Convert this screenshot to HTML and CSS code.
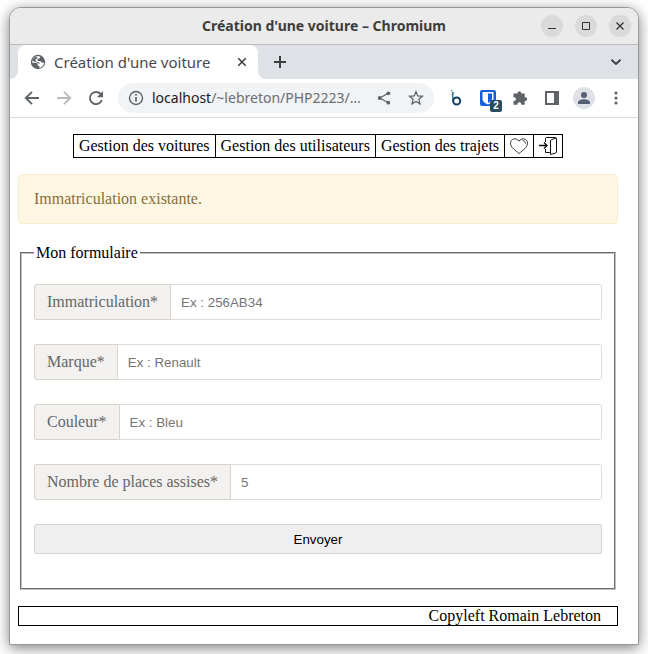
FILE: index.html
```html
<!DOCTYPE html>
<html lang="fr">
<head>
<meta charset="utf-8">
<title>Création d'une voiture</title>
<link rel="stylesheet" href="styles.css">
</head>
<body>
<div class="window">
  <header class="titlebar">
    <div class="window-title">Création d'une voiture – Chromium</div>
    <div class="window-buttons">
      <button class="round" aria-label="Réduire"><svg width="22" height="22" viewBox="0 0 22 22"><path d="M7 13.5h8" stroke="#333" stroke-width="1"/></svg></button>
      <button class="round" aria-label="Agrandir"><svg width="22" height="22" viewBox="0 0 22 22"><path d="M7.500 7.500h7v7h-7z" fill="none" stroke="#333"/></svg></button>
      <button class="round" aria-label="Fermer"><svg width="22" height="22" viewBox="0 0 22 22"><path d="M7.500 7.500l7 7m0-7l-7 7" stroke="#333" stroke-width="1.300"/></svg></button>
    </div>
  </header>

  <div class="tabstrip">
    <div class="strip-start"></div>
    <div class="tab">
      <svg width="16" height="16" viewBox="0 0 16 16"><circle cx="8" cy="8" r="7.200" fill="#5f6368"/><path d="M8.200 2l2 .8-.4 1.500-2 .5-.6 1.400 1 .9 2.200-.1 1.200 1.500 2.500.3a6.200 6.200 0 0 1-4.600 5.100l-.2-1.700-1.700-.7.300-1.700L6.100 9 2 8.600A6.200 6.200 0 0 1 8.200 2z" fill="#fff"/><path d="M3 5.200l2-2 2.300-.7-.4 1.900-1.400 1 .2 1.900 2.200.9 1.500.4.300 1.300L6 8.300 2 6.800z" fill="#5f6368"/></svg>
      <span class="tab-title">Création d'une voiture</span>
      <button class="plain" aria-label="Fermer l'onglet"><svg width="16" height="16" viewBox="0 0 16 16"><path d="M4.300 4.300l7.400 7.400m0-7.400l-7.400 7.400" stroke="#3c4043" stroke-width="1.600"/></svg></button>
    </div>
    <div class="strip-rest">
      <button class="plain" aria-label="Nouvel onglet"><svg width="14" height="14" viewBox="0 0 14 14"><path d="M7 1v12M1 7h12" stroke="#3c4043" stroke-width="2"/></svg></button>
      <button class="plain" aria-label="Rechercher des onglets"><svg width="12" height="12" viewBox="0 0 12 12"><path d="M1.500 3.800L6 8l4.500-4.200" fill="none" stroke="#3c4043" stroke-width="1.900"/></svg></button>
    </div>
  </div>

  <div class="toolbar">
    <div class="navigation">
      <button class="plain" aria-label="Précédent"><svg width="16" height="16" viewBox="0 0 16 16"><path d="M15 8H2M8 1.800L1.800 8 8 14.200" fill="none" stroke="#5f6368" stroke-width="1.900"/></svg></button>
      <button class="plain" aria-label="Suivant"><svg width="16" height="16" viewBox="0 0 16 16"><path d="M1 8h13M8 1.800L14.200 8 8 14.200" fill="none" stroke="#b7b9bc" stroke-width="1.900"/></svg></button>
      <button class="plain" aria-label="Actualiser"><svg width="16" height="16" viewBox="0 0 16 16"><path d="M13.800 10A6.100 6.100 0 1 1 12.600 4" fill="none" stroke="#5f6368" stroke-width="1.900"/><path d="M15 1v6.200H8.800z" fill="#5f6368"/></svg></button>
    </div>
    <div class="address">
      <svg width="16" height="16" viewBox="0 0 16 16"><circle cx="8" cy="8" r="6.500" fill="none" stroke="#5f6368" stroke-width="1.400"/><path d="M8 7v4.500M8 4v1.700" stroke="#5f6368" stroke-width="1.700"/></svg>
      <div class="url"><span class="host">localhost</span>/~lebreton/PHP2223/…</div>
      <button class="plain" aria-label="Partager"><svg width="14" height="14" viewBox="0 0 14 14"><path d="M11.300 2.300L2.800 7l8.500 4.700" fill="none" stroke="#5f6368" stroke-width="1.300"/><g fill="#5f6368"><circle cx="11.300" cy="2.300" r="1.900"/><circle cx="2.700" cy="7" r="1.900"/><circle cx="11.300" cy="11.700" r="1.900"/></g></svg></button>
      <button class="plain" aria-label="Favori"><svg width="16" height="16" viewBox="0 0 16 16"><path d="M8 1.700l1.800 4.200 4.600.4-3.500 3 1.100 4.500L8 11.400l-4 2.400 1.100-4.500-3.500-3 4.600-.4z" fill="none" stroke="#5f6368" stroke-width="1.300"/></svg></button>
    </div>
    <div class="extensions">
      <svg width="12" height="16" viewBox="0 0 12 16"><path d="M1 .8h1.500M2.300 2.600h1.500M1.500 4.400h2" stroke="#7da6ba" stroke-width="1.400"/><path d="M2.800 2v9" stroke="#3c7a97" stroke-width="1.500"/><circle cx="6.700" cy="11" r="3.500" fill="none" stroke="#143f60" stroke-width="2"/></svg>
      <div class="vault">
        <svg width="16" height="16" viewBox="0 0 16 16"><rect width="16" height="16" rx="2" fill="#175ddc"/><path d="M2.500 2h11v6.500c0 3-2.500 4.800-5.500 6-3-1.200-5.500-3-5.500-6z" fill="#fff"/><path d="M8 3.500h4v5c0 2-1.700 3.400-4 4.400z" fill="#175ddc"/></svg>
        <span class="count">2</span>
      </div>
      <svg width="16" height="16" viewBox="0 0 16 16"><path d="M1.500 3.500h4V3a1.800 1.800 0 0 1 3.700 0v.5h3.500v3.700h.6a1.800 1.800 0 0 1 0 3.700h-.6v3.800H9.200v-.6a1.800 1.800 0 0 0-3.700 0v.6h-4v-3.800h.6a1.800 1.800 0 0 0 0-3.700h-.6z" fill="#5f6368"/></svg>
      <svg width="16" height="16" viewBox="0 0 16 16"><path d="M1 1h14v14H1zM3 3v10h7V3z" fill="#5f6368" fill-rule="evenodd"/></svg>
      <svg width="22" height="22" viewBox="0 0 22 22"><circle cx="11" cy="11" r="11" fill="#dee1e6"/><circle cx="11" cy="8" r="3" fill="#566074"/><path d="M5 17v-1.500c0-2 3.500-3.200 6-3.200s6 1.200 6 3.200V17z" fill="#566074"/></svg>
      <svg width="16" height="16" viewBox="0 0 16 16"><g fill="#5f6368"><circle cx="8" cy="3" r="1.600"/><circle cx="8" cy="8" r="1.600"/><circle cx="8" cy="13" r="1.600"/></g></svg>
    </div>
  </div>

  <div class="page">
    <nav class="menu">
      <a href="#voitures">Gestion des voitures</a>
      <a href="#utilisateurs">Gestion des utilisateurs</a>
      <a href="#trajets">Gestion des trajets</a>
      <a href="#preference" aria-label="Préférence"><svg width="18" height="18" viewBox="0 0 18 18"><path d="M9 16.500C5.500 13.500.5 10.500.5 6.200.5 1.500 6.500.3 9 4.200c2.500-3.900 8.500-2.700 8.500 2 0 4.300-5 7.300-8.500 10.300z" fill="none" stroke="#222" stroke-width=".9"/><path d="M12.500 3.600c2 0 3 1.200 3 3" fill="none" stroke="#222" stroke-width=".8"/></svg></a>
      <a href="#connexion" aria-label="Connexion"><svg width="18" height="18" viewBox="0 0 18 18"><path d="M0 8.500h7.500M5 5.500l3 3-3 3" fill="none" stroke="#111" stroke-width="1.300"/><path d="M6.500 5V1.500Q6.500.5 7.500.5h8.500q1.500 0 1.500 1.500v13q0 .8-.8 1l-5.200 1.500V4q0-1 1-1.300L17 1M6.500 12v3.500h5" fill="none" stroke="#111" stroke-width="1"/></svg></a>
    </nav>

    <div class="alert">Immatriculation existante.</div>

    <form>
      <fieldset>
        <legend>Mon formulaire</legend>
        <div class="field">
          <label for="immatriculation">Immatriculation*</label>
          <input id="immatriculation" type="text" placeholder="Ex : 256AB34">
        </div>
        <div class="field">
          <label for="marque">Marque*</label>
          <input id="marque" type="text" placeholder="Ex : Renault">
        </div>
        <div class="field">
          <label for="couleur">Couleur*</label>
          <input id="couleur" type="text" placeholder="Ex : Bleu">
        </div>
        <div class="field">
          <label for="places">Nombre de places assises*</label>
          <input id="places" type="text" placeholder="5">
        </div>
        <button class="submit" type="button">Envoyer</button>
      </fieldset>
    </form>

    <footer>Copyleft Romain Lebreton</footer>
  </div>
</div>
</body>
</html>
```
FILE: styles.css
```css
* { box-sizing: border-box; }

body {
  margin: 0;
  padding: 7px 9px 9px;
  background: #fff;
  font: 16px/18px "Liberation Serif", serif;
  color: #000;
}

svg { display: block; flex: none; }

.window {
  border: 1px solid #999;
  border-radius: 12px 12px 0 0;
  background: #fff;
  box-shadow: 0 3px 14px rgba(0, 0, 0, 0.5);
  overflow: hidden;
}

.plain, .round {
  display: block;
  flex: none;
  padding: 0;
  border: 0;
  background: none;
}

/* Window frame */

.titlebar {
  display: grid;
  grid-template-columns: 1fr auto 1fr;
  align-items: center;
  height: 37px;
  padding-right: 7px;
  border-bottom: 1px solid #bbb;
  background: #ebebeb;
}

.window-title {
  grid-column: 2;
  padding-left: 7px;
  font: bold 14px/20px "Noto Sans", sans-serif;
  color: #3d3d3d;
}

.window-buttons {
  display: flex;
  justify-content: flex-end;
  gap: 12px;
}

.round {
  border-radius: 50%;
  background: #dadada;
}

/* The upper half shows behind the tab's corners, the lower half behind the strip's */
.tabstrip {
  display: flex;
  height: 34px;
  background: linear-gradient(#dee1e6 50%, #fff 50%);
}

.strip-start {
  width: 8px;
  border-radius: 0 0 8px 0;
  background: #dee1e6;
}

.tab {
  display: flex;
  align-items: center;
  gap: 8px;
  width: 240px;
  padding: 0 8px 0 12px;
  border-radius: 8px 8px 0 0;
  background: #fff;
}

.tab-title {
  flex: 1;
  font: 15px/20px "Noto Sans", sans-serif;
  white-space: nowrap;
  color: #45494d;
}

.strip-rest {
  display: flex;
  flex: 1;
  align-items: center;
  justify-content: space-between;
  padding: 0 16px 0 15px;
  border-radius: 0 0 0 8px;
  background: #dee1e6;
}

.toolbar {
  display: flex;
  align-items: center;
  height: 39px;
  padding: 0 6px 0 14px;
  border-bottom: 1px solid #dadce0;
}

.navigation {
  display: flex;
  gap: 16px;
  margin-right: 14px;
}

.address {
  display: flex;
  flex: 1;
  align-items: center;
  height: 30px;
  min-width: 0;
  padding: 0 10px;
  border-radius: 15px;
  background: #f1f3f4;
}

.url {
  flex: 1;
  padding-left: 8px;
  font: 14px/20px "Noto Sans", sans-serif;
  white-space: nowrap;
  color: #6b6f73;
}

.host { color: #202124; }

.address .plain + .plain { margin-left: 17px; }

.extensions {
  display: grid;
  grid-template-columns: repeat(6, 32px);
  align-items: center;
  justify-items: center;
  margin-left: 6px;
}

.vault { position: relative; }

.count {
  position: absolute;
  top: 10px;
  left: 10px;
  width: 12px;
  border-radius: 2px;
  background: #2b4b5e;
  font: bold 10px/12px "Liberation Sans", sans-serif;
  text-align: center;
  color: #fff;
}

/* Page */

.page {
  padding: 16px 20px 18px 8px;
}

.menu {
  display: flex;
  width: fit-content;
  margin: 0 auto 16px;
  border: 1px solid #000;
}

.menu a {
  display: flex;
  align-items: center;
  height: 22px;
  padding: 0 5px;
  color: #000;
  text-decoration: none;
}

.menu a + a { border-left: 1px solid #000; }

.alert {
  margin-bottom: 20px;
  padding: 15px;
  border: 1px solid #faebcc;
  border-radius: 4px;
  background: #fdf7e3;
  color: #8a6d3b;
}

fieldset {
  margin: 0 2px;
  padding: 22px 12px 34px;
  border: 2px groove #c0c0c0;
}

legend { padding: 0 2px; }

.field {
  display: flex;
  height: 36px;
  margin-bottom: 24px;
}

.field label {
  padding: 8px 12px;
  border: 1px solid #d9d2ca;
  border-radius: 2px 0 0 2px;
  background: #f3f1ef;
  color: #666;
}

.field input {
  flex: 1;
  min-width: 0;
  padding: 0 10px;
  border: 1px solid #dfdcd8;
  border-left: 0;
  border-radius: 0 2px 2px 0;
  font-family: "Liberation Sans", sans-serif;
}

.submit {
  display: block;
  width: 100%;
  height: 30px;
  border: 1px solid #d5d2cf;
  border-radius: 2px;
  background: #efefef;
  font-family: "Liberation Sans", sans-serif;
  color: #000;
}

footer {
  margin-top: 16px;
  padding-right: 16px;
  border: 1px solid #000;
  text-align: right;
}
```
